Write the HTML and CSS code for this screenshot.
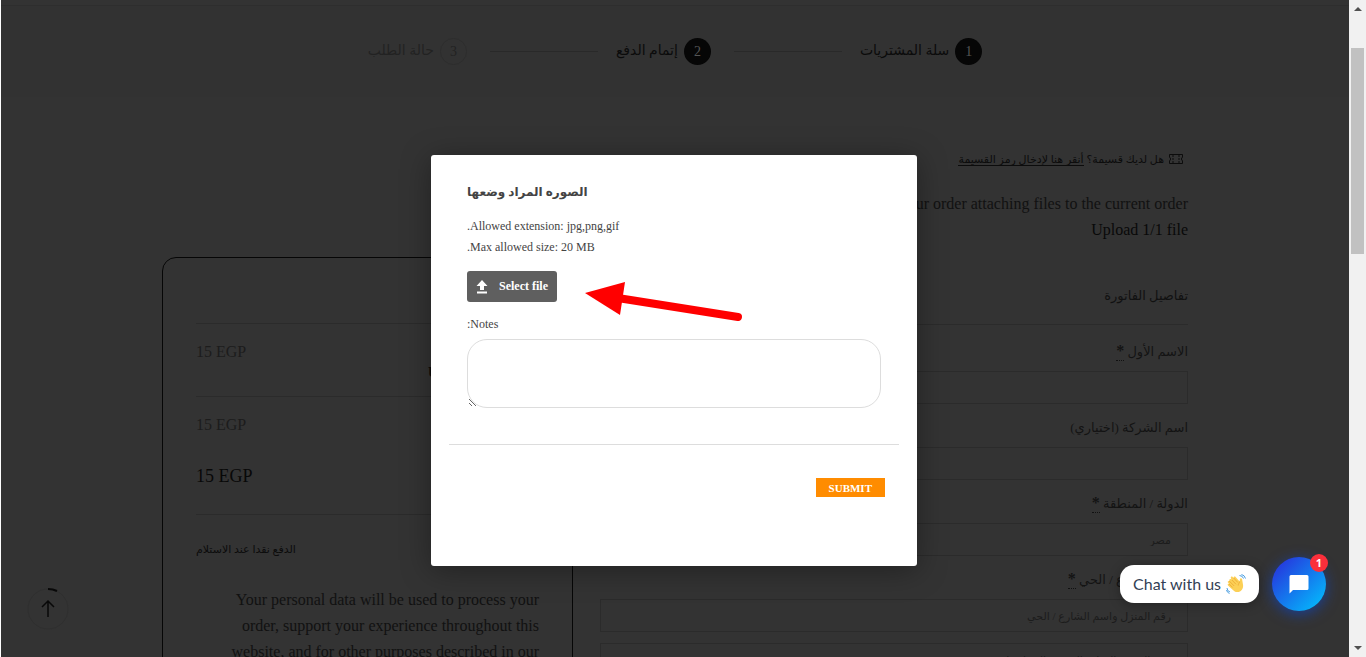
FILE: index.html
```html
<!DOCTYPE html>
<html lang="ar">
<head>
<meta charset="utf-8">
<title>إتمام الدفع</title>
<link rel="stylesheet" href="styles.css">
</head>
<body>
<div class="window">
  <div class="page" dir="rtl">
    <header class="topbar"></header>
    <ol class="steps">
      <li class="step"><span class="num">1</span><span class="ar">سلة المشتريات</span></li>
      <li class="step line"><span class="num">2</span><span class="ar">إتمام الدفع</span></li>
      <li class="step line todo"><span class="num">3</span><span class="ar">حالة الطلب</span></li>
    </ol>
    <main class="content">
      <p class="coupon">
        <svg width="14" height="10" viewBox="0 0 14 10" fill="none" stroke="#0c0c0c"><path d="M.5.5h13v2.500q-2.500 2 0 4v2.500H.5V7q2.500-2 0-4zM4 1v2M4 4v2M4 7v2M10 1v2M10 4v2M10 7v2"/></svg>
        <span class="ar-sm">هل لديك قسيمة؟ <a href="#coupon">أنقر هنا لإدخال رمز القسيمة</a></span>
      </p>
      <div class="notice" dir="ltr">
        <p>Customize your order attaching files to the current order</p>
        <p class="strong">Upload 1/1 file</p>
      </div>
      <div class="columns">
        <form class="billing">
          <h2>تفاصيل الفاتورة</h2>
          <div class="field"><label for="fname">الاسم الأول <abbr title="مطلوب">*</abbr></label><input id="fname" type="text"></div>
          <div class="field"><label for="company">اسم الشركة (اختياري)</label><input id="company" type="text"></div>
          <div class="field"><label for="country">الدولة / المنطقة <abbr title="مطلوب">*</abbr></label><select id="country"><option>مصر</option></select></div>
          <div class="field"><label for="street">عنوان الشارع / الحي <abbr title="مطلوب">*</abbr></label><input id="street" type="text" placeholder="رقم المنزل واسم الشارع / الحي"></div>
          <div class="field"><input type="text" aria-label="الشقة" placeholder="رقم الشقة، الجناح، الوحدة، إلخ (اختياري)"></div>
        </form>
        <section class="order">
          <div class="row product"><b class="name" dir="ltr">Upload</b><span class="price" dir="ltr">15 EGP</span></div>
          <div class="row"><span class="price" dir="ltr">15 EGP</span></div>
          <div class="row total"><span class="price" dir="ltr">15 EGP</span></div>
          <p class="pay">الدفع نقدا عند الاستلام</p>
          <p class="privacy" dir="ltr">Your personal data will be used to process your order, support your experience throughout this website, and for other purposes described in our privacy policy.</p>
        </section>
      </div>
    </main>
    <button class="totop" type="button" aria-label="أعلى">
      <svg width="42" height="42" viewBox="0 0 42 42" fill="none"><circle cx="21" cy="21" r="20" stroke="#2f2f2f"/><path d="M21 1q5 0 9 2" stroke="#080808" stroke-width="2"/><path d="M21 29V14M15 19l6-6 6 6" stroke="#080808" stroke-width="1.500"/></svg>
    </button>
  </div>

  <div class="overlay">
    <form class="modal" dir="rtl">
      <div class="modal-body">
        <h3>الصوره المراد وضعها</h3>
        <p>Allowed extension: jpg,png,gif.</p>
        <p>Max allowed size: 20 MB.</p>
        <button class="select" type="button" dir="ltr">
          <svg width="12" height="14" viewBox="0 0 12 14" fill="#fff"><path d="M6 0l5.500 6H8v4H4V6H.5zM1 11.500h10V13.500H1z"/></svg>
          Select file
        </button>
        <label for="notes">Notes:</label>
        <textarea id="notes"></textarea>
      </div>
      <footer><button class="submit" type="submit">SUBMIT</button></footer>
    </form>
  </div>

  <svg class="arrow" width="160" height="44" viewBox="0 0 160 44"><path d="M1 13L41 2 36 35z" fill="#f00"/><path d="M37 18.500L154 37" stroke="#f00" stroke-width="8" stroke-linecap="round"/></svg>

  <div class="chat">
    <div class="bubble">Chat with us
      <svg width="20" height="20" viewBox="0 0 20 20"><path d="M3.500 5.500c.8-.8 1.600-.4 2.200.3L4.800 4c-.4-1 .9-2 1.800-1.100l1 1c-.3-1.200 1.200-1.900 2-.9l4 4.500.3-2.200c.2-1.400 2-1.200 2.200 0l.8 4.700c.8 3.500-.6 6.300-3 7.500-2.600 1.300-5 .4-6.700-1.300L2 11.500c-.9-.9.200-2.100 1.200-1.500L2 8.500C1.300 7.500 2.300 6.600 3.200 7z" fill="#fcd056"/><path d="M5.700 5.800l4.300 4.500M7.600 3.900l4.200 4.600M3.200 7l5 5M3.200 10l3.500 3.500M13.600 7.500c.2 1.500-1.600 2-1.400 4" fill="none" stroke="#e8a12d" stroke-width=".7"/><path d="M13.500 1.500q3 0 4 3M15.500.5q3 .500 4 4M1 14q0 3 3 4M.5 16q.500 2.500 3 3.500" fill="none" stroke="#4c9fe0" stroke-width="1"/></svg>
    </div>
    <button class="launcher" type="button" aria-label="Open chat">
      <svg width="20" height="20" viewBox="0 0 20 20" fill="#fff"><path d="M2 1h16q1.500 0 1.500 1.500v12q0 1.500-1.500 1.500H4l-3.500 3.500v-17Q.5 1 2 1z"/></svg>
      <span class="badge">1</span>
    </button>
  </div>
</div>
<aside class="scrollbar" aria-hidden="true">
  <i class="up"></i><div class="track"><div class="thumb"></div></div><i class="down"></i>
</aside>
</body>
</html>
```
FILE: styles.css
```css
* { box-sizing: border-box; }
body, p, h2, h3, ol { margin: 0; padding: 0; }
body {
  display: flex;
  height: 100vh;
  overflow: hidden;
  font: 16px/26px "Liberation Serif", "DejaVu Sans", serif;
  color: #111;
}
button, input, select, textarea { font-family: inherit; }
.window {
  position: relative;
  flex: 1;
  min-width: 0;
  overflow: hidden;
  border-left: 1px solid #fff;
  background: #333;
}
.page { height: 100%; overflow: hidden; }
.topbar { height: 6px; border-bottom: 1px solid #2e2e2e; }
.steps {
  display: flex;
  justify-content: center;
  height: 91px;
  background: #323232;
  list-style: none;
}
.step { display: flex; align-items: center; gap: 6px; color: #0b0b0b; }
.step.line::before {
  content: "";
  width: 108px;
  margin: 0 18px 0 17px;
  border-top: 1px solid #292929;
}
.num {
  width: 27px;
  height: 27px;
  border-radius: 50%;
  background: #060606;
  color: #555;
  font-size: 14px;
  line-height: 27px;
  text-align: center;
}
.ar { padding-bottom: 2px; font-size: 14px; }
.todo { color: #222; }
.todo .num { background: none; border: 1px solid #2d2d2d; line-height: 25px; color: #222; }
.content { width: 80%; max-width: 1026px; margin: 0 auto; padding-top: 49px; }
.coupon { display: flex; align-items: center; gap: 5px; padding-right: 5px; color: #0c0c0c; }
.ar-sm { font-size: 11px; }
.coupon a { color: inherit; text-decoration: none; border-bottom: 1px solid; }
.notice { margin: 19px 0 14px; text-align: right; }
.strong { color: #090909; }
.columns { display: grid; grid-template-columns: 588fr 411fr; gap: 27px; align-items: start; }
.billing { padding-top: 26px; }
.billing h2 {
  height: 42px;
  margin-bottom: 14px;
  border-bottom: 1px solid #2b2b2b;
  font-size: 13px;
  font-weight: normal;
}
.field { display: flex; flex-direction: column; gap: 6px; margin-bottom: 11px; }
.field label { height: 26px; font-size: 13px; color: #131313; }
.field abbr {
  display: inline-block;
  height: 20px;
  border-bottom: 1px dotted #111;
  font-size: 16px;
  font-weight: bold;
  line-height: 20px;
  text-decoration: none;
}
.field input, .field select {
  width: 100%;
  height: 33px;
  padding: 0 16px;
  border: 1px solid #2b2b2b;
  background: none;
  color: #1c1c1c;
  font-size: 11px;
  appearance: none;
}
.field input::placeholder { color: #1c1c1c; }
.order {
  min-height: 500px;
  padding: 0 33px;
  border: 1px solid #060606;
  border-radius: 14px;
}
.row {
  display: flex;
  justify-content: flex-end;
  height: 73px;
  padding-top: 15px;
  border-top: 1px solid #2b2b2b;
  color: #1c1c1c;
}
.product { justify-content: space-between; margin-top: 65px; }
.name { width: 111px; padding-top: 21px; font-size: 14px; color: #080808; }
.total { height: auto; padding: 0 0 25px; border-top: 0; border-bottom: 1px solid #2b2b2b; color: #080808; font-size: 18px; margin-top: -6px; }
.pay { padding-top: 21px; font-size: 11px; text-align: left; color: #0c0c0c; }
.privacy { padding-top: 25px; text-align: right; }
.totop { position: absolute; left: 26px; bottom: 27px; padding: 0; border: 0; background: none; }
.totop svg, .launcher svg, .select svg { display: block; }

.overlay { position: absolute; inset: 155px 0 auto; display: flex; justify-content: center; }
.modal {
  width: 486px;
  padding: 24px 18px 69px;
  margin-right: 2px;
  border-radius: 3px;
  background: #fff;
  box-shadow: 0 4px 30px rgba(0, 0, 0, .35);
  color: #444;
  font-size: 12px;
  line-height: 21px;
  text-align: left;
}
.modal-body {
  display: flex;
  flex-direction: column;
  align-items: flex-end;
  padding: 0 18px 36px;
  border-bottom: 1px solid #ddd;
}
.modal h3 { height: 37px; font-size: 12px; line-height: 26px; }
.select {
  display: flex;
  align-items: center;
  gap: 11px;
  height: 31px;
  margin: 13px 0 12px;
  padding: 0 9px;
  border: 0;
  border-radius: 3px;
  background: #5f5f5f;
  color: #fff;
  font-size: 12px;
  font-weight: bold;
}
.modal textarea {
  width: 100%;
  height: 69px;
  margin-top: 4px;
  padding: 10px 16px;
  border: 1px solid #ddd;
  border-radius: 20px;
  resize: both;
}
.modal footer { display: flex; padding: 33px 14px 0; }
.submit {
  height: 19px;
  padding: 0 13px;
  border: 0;
  background: #ff8c00;
  color: #fff;
  font-size: 11px;
  font-weight: bold;
}
.arrow { position: absolute; left: 583px; top: 280px; }

.chat { position: absolute; right: 23px; bottom: 46px; display: flex; align-items: center; gap: 13px; }
.bubble {
  display: flex;
  align-items: center;
  gap: 5px;
  height: 38px;
  padding: 0 13px;
  border-radius: 14px;
  background: #fff;
  box-shadow: 0 2px 12px rgba(0, 0, 0, .3);
  color: #333f55;
  font: 16px/20px Lato, sans-serif;
}
.launcher {
  position: relative;
  display: grid;
  place-items: center;
  width: 54px;
  height: 54px;
  padding: 0;
  border: 0;
  border-radius: 50%;
  background: linear-gradient(135deg, #2a27da, #00c6ff);
  box-shadow: 0 3px 14px rgba(0, 77, 255, .5);
}
.badge {
  position: absolute;
  top: -3px;
  right: -2px;
  width: 18px;
  height: 18px;
  border-radius: 50%;
  background: #fb2f3b;
  color: #fff;
  font: bold 11px/18px "Open Sans", sans-serif;
}
.scrollbar { display: flex; flex-direction: column; align-items: center; width: 17px; padding: 7px 0; background: #f1f1f1; }
.up, .down { border: 4px solid transparent; border-top: 0; border-bottom-color: #505050; }
.down { transform: rotate(180deg); }
.track { flex: 1; padding-top: 37px; }
.thumb { width: 13px; height: 206px; background: #c1c1c1; }
```
